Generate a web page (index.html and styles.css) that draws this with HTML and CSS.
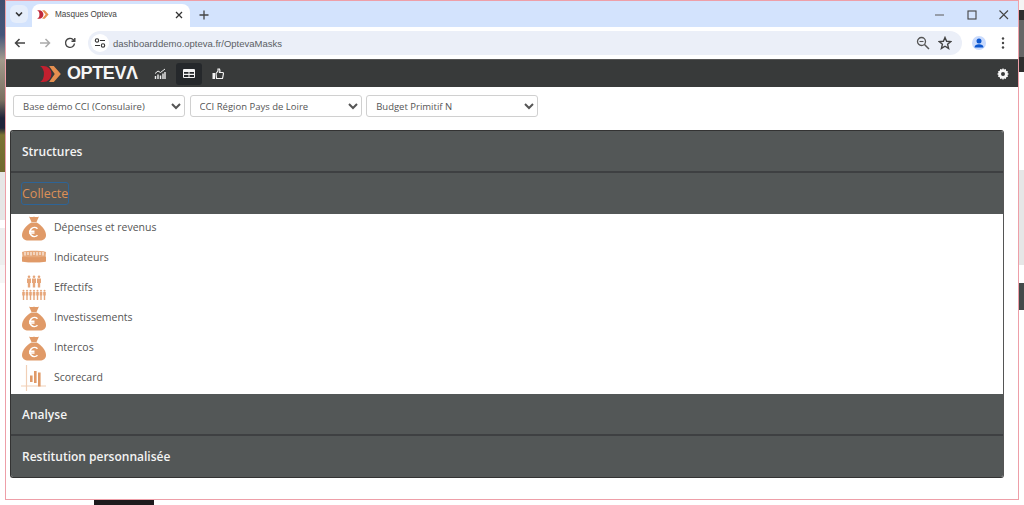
FILE: index.html
```html
<!DOCTYPE html>
<html lang="fr">
<head>
<meta charset="utf-8">
<title>Masques Opteva</title>
<link rel="stylesheet" href="styles.css">
</head>
<body>
<div class="bg-left"></div>
<div class="bg-right"></div>
<div class="bg-bottom"></div>
<div class="window">
  <div class="tabstrip">
    <span class="tabsearch"><svg width="10" height="10" viewBox="0 0 10 10"><path d="M2 3.500 5 6.500 8 3.500" fill="none" stroke="#333" stroke-width="1.600"/></svg></span>
    <div class="tab">
      <svg class="favicon" width="12" height="9" viewBox="0 0 14 10"><path d="M0 0h2.500a5 5 0 0 1 0 10H0a5 5 0 0 0 2.800-5A5 5 0 0 0 0 0z" fill="#c0283a"/><path d="M6 0h3l4.500 5L9 10H6l4-5z" fill="#e8904f"/></svg>
      <span class="tabtitle">Masques Opteva</span>
      <svg class="tabclose" width="10" height="10" viewBox="0 0 10 10"><path d="M2 2 8 8M8 2 2 8" stroke="#333" stroke-width="1.300"/></svg>
    </div>
    <svg class="newtab" width="12" height="12" viewBox="0 0 12 12"><path d="M6 1.500v9M1.500 6h9" stroke="#444" stroke-width="1.300"/></svg>
    <div class="winctl">
      <svg width="12" height="12" viewBox="0 0 12 12"><path d="M1 6h9" stroke="#666" stroke-width="1.100"/></svg>
      <svg width="12" height="12" viewBox="0 0 12 12"><rect x="2" y="2" width="8" height="8" fill="none" stroke="#444" stroke-width="1.100"/></svg>
      <svg width="12" height="12" viewBox="0 0 12 12"><path d="M1.500 1.500 10 10M10 1.500 1.500 10" stroke="#444" stroke-width="1.100"/></svg>
    </div>
  </div>
  <div class="toolbar">
    <svg class="nav" width="14" height="14" viewBox="0 0 14 14"><path d="M12 7H2.500M6.500 3 2.500 7l4 4" fill="none" stroke="#444" stroke-width="1.500"/></svg>
    <svg class="nav" width="14" height="14" viewBox="0 0 14 14"><path d="M2 7h9.500M7.500 3l4 4-4 4" fill="none" stroke="#aaa" stroke-width="1.500"/></svg>
    <svg class="nav" width="14" height="14" viewBox="0 0 14 14"><path d="M11.500 7.500A4.500 4.500 0 1 1 10 3.500L11.500 5M11.800 2v3.300H8.500" fill="none" stroke="#444" stroke-width="1.400"/></svg>
    <div class="omnibox">
      <span class="siteinfo"><svg width="12" height="10" viewBox="0 0 12 10"><circle cx="3" cy="2.500" r="1.700" fill="none" stroke="#333" stroke-width="1.100"/><path d="M6 2.500h5M1 7.500h5" stroke="#333" stroke-width="1.200"/><circle cx="9" cy="7.500" r="1.700" fill="none" stroke="#333" stroke-width="1.100"/></svg></span>
      <span class="url">dashboarddemo.opteva.fr/OptevaMasks</span>
      <svg class="omni-zoom" width="14" height="14" viewBox="0 0 14 14"><circle cx="5.500" cy="5.500" r="4" fill="none" stroke="#555" stroke-width="1.300"/><path d="M8.500 8.500 13 13" stroke="#555" stroke-width="1.500"/><path d="M3.500 5.500h4" stroke="#555" stroke-width="1.100"/></svg>
      <svg class="omni-star" width="14" height="14" viewBox="0 0 14 14"><path d="M7 1.500 8.600 5.300 12.800 5.600 9.600 8.300 10.600 12.400 7 10.200 3.400 12.400 4.400 8.300 1.200 5.600 5.400 5.300z" fill="none" stroke="#444" stroke-width="1.400"/></svg>
    </div>
    <span class="avatar"><svg width="14" height="14" viewBox="0 0 14 14"><circle cx="7" cy="5" r="2.500" fill="#0b57d0"/><path d="M2.500 11.500c0-2.500 2-3.200 4.500-3.200s4.500.7 4.500 3.200z" fill="#0b57d0"/></svg></span>
    <svg class="kebab" width="4" height="14" viewBox="0 0 4 14"><circle cx="2" cy="2.500" r="1.200" fill="#444"/><circle cx="2" cy="7" r="1.200" fill="#444"/><circle cx="2" cy="11.500" r="1.200" fill="#444"/></svg>
  </div>
  <header class="appbar">
    <svg class="logo-mark" width="21" height="16" viewBox="0 0 22 17"><path d="M0 0h3.500a8.500 8.500 0 0 1 0 17H0a10 10 0 0 0 4-8.500A10 10 0 0 0 0 0z" fill="#c3202f"/><path d="M9.500 0h5L22 8.500 14.500 17h-5l6-8.500z" fill="#e58f50"/></svg>
    <span class="logo-text">OPTEVΛ</span>
    <nav class="appnav">
      <span class="navitem"><svg width="12" height="12" viewBox="0 0 12 12"><path d="M1.500 11V8M4 11V6.500M6.500 11V7.500M9 11V5.500M11 11V4" stroke="#eee" stroke-width="1.400"/><path d="M1 5.500 4 3l2.500 1.500L11 1" fill="none" stroke="#eee" stroke-width="1"/></svg></span>
      <span class="navitem active"><svg width="12" height="11" viewBox="0 0 12 11"><path d="M1 1a1 1 0 0 0-1 1v7a1 1 0 0 0 1 1h10a1 1 0 0 0 1-1V2a1 1 0 0 0-1-1zM1 4h4.500v1.800H1zm5.500 0H11v1.800H6.500zM1 7h4.500v2H1zm5.500 0H11v2H6.500z" fill="#f4f4f4" fill-rule="evenodd"/></svg></span>
      <span class="navitem"><svg width="12" height="12" viewBox="0 0 12 12"><rect x="0.500" y="5" width="2.500" height="6" fill="#f4f4f4"/><path d="M4 5.500 6 3V1h1.500L8 3 7.500 4.500H11l.5 1-1 5H4.500z" fill="none" stroke="#f4f4f4" stroke-width="1.200"/></svg></span>
    </nav>
    <svg class="gear" width="12" height="12" viewBox="0 0 12 12"><path d="M6 0l1 1.600 1.800-.5.400 1.800 1.800.4-.5 1.800L12 6l-1.500 1 .5 1.800-1.800.4-.4 1.800-1.800-.5L6 12l-1-1.500-1.800.5-.4-1.800L1 8.800 1.500 7 0 6l1.500-1L1 3.200l1.800-.4.400-1.800 1.800.5zM6 4a2 2 0 1 0 0 4 2 2 0 0 0 0-4z" fill="#f6f6f6" fill-rule="evenodd"/></svg>
  </header>
  <div class="filters">
    <select class="pick"><option>Base démo CCI (Consulaire)</option></select>
    <select class="pick"><option>CCI Région Pays de Loire</option></select>
    <select class="pick"><option>Budget Primitif N</option></select>
  </div>
  <div class="accordion">
    <div class="head"><span>Structures</span></div>
    <div class="head open"><span class="focus">Collecte</span></div>
    <ul class="items">
      <li><svg class="ic" viewBox="0 0 26 26"><use href="#bag"/></svg><span>Dépenses et revenus</span></li>
      <li><svg class="ic" viewBox="0 0 26 26"><use href="#ruler"/></svg><span>Indicateurs</span></li>
      <li><svg class="ic" viewBox="0 0 26 26"><use href="#people"/></svg><span>Effectifs</span></li>
      <li><svg class="ic" viewBox="0 0 26 26"><use href="#bag"/></svg><span>Investissements</span></li>
      <li><svg class="ic" viewBox="0 0 26 26"><use href="#bag"/></svg><span>Intercos</span></li>
      <li><svg class="ic" viewBox="0 0 26 26"><use href="#score"/></svg><span>Scorecard</span></li>
    </ul>
    <div class="head"><span>Analyse</span></div>
    <div class="head last"><span>Restitution personnalisée</span></div>
  </div>
</div>
<svg class="defs" width="0" height="0">
  <defs>
    <g id="bag">
      <path d="M8 1.500c2 1 3 .2 5 .2s3 .8 5-.2l-2.500 5.500h-5z" fill="#e09a68"/>
      <path d="M10.300 7.500h5.400C20 10 25 15 25 20c0 4-3 5.500-6 5.500H7c-3 0-6-1.500-6-5.500 0-5 5-10 9.300-12.500z" fill="#e09a68"/>
      <path d="M16.500 13.700a4.500 4.500 0 1 0 0 6.600M8 16.200h5.500M8 17.900h5.500" fill="none" stroke="#fff" stroke-width="1.500"/>
    </g>
    <g id="ruler">
      <path d="M1 7c3-1.200 8-1.200 12-1.200s9 0 12 1.200l-.8 9.500c-3 1-7 .8-11.200.8s-8 .2-11-.8z" fill="#e6a97c"/>
      <path d="M1 11.500c3 1 21 1 24 0v5c-3 1-21 1-24 0z" fill="#e09a68"/>
      <path d="M4 7v3.500M7 7v3M10 7v3.500M13 7v3M16 7v3.500M19 7v3M22 7v3.500" stroke="#fff" stroke-width="1"/>
    </g>
    <g id="people" fill="#e6a67a">
      <g id="big"><circle cx="8" cy="1.800" r="1.300"/><path d="M6 3.500h4v4.500H9.200v4.500H6.800V8H6z"/></g>
      <use href="#big" x="5"/><use href="#big" x="10"/>
      <g id="small"><circle cx="2.500" cy="15.800" r="1"/><path d="M1.200 17h2.600v3.500h-.6v4.500H1.800v-4.500h-.6z"/></g>
      <use href="#small" x="3.500"/><use href="#small" x="7"/><use href="#small" x="10.500"/><use href="#small" x="14"/><use href="#small" x="17.500"/><use href="#small" x="21"/>
    </g>
    <g id="score">
      <path d="M5.500 0v26M0 21h25" stroke="#f1cfb6" stroke-width="1.200"/>
      <path d="M9 10.500h2.600v6.500H9zM13 6h2.600v12H13zM17 7.500h2.600v14H17z" fill="#e09a68"/>
    </g>
  </defs>
</svg>
</body>
</html>
```

FILE: styles.css
```css
* { box-sizing: border-box; }
html, body { margin: 0; height: 505px; overflow: hidden; }
body { background: #fff; font-family: "Open Sans", "Noto Sans", sans-serif; position: relative; }
.defs { position: absolute; }
.bg-left { position: absolute; left: 0; top: 0; width: 5px; height: 505px;
  background: linear-gradient(#3f4f70 0, #46557a 35px, #a39a8c 60px, #7a6f60 100px, #20243a 118px, #20243a 128px, #7b7434 135px, #6f6a30 172px, #e6e6e6 172px, #e6e6e6 220px, #fff 220px, #fff 228px, #eeeeee 228px, #eeeeee 265px, #f6f6f6 265px, #f6f6f6 283px, #fff 283px); }
.bg-right { position: absolute; left: 1019px; top: 0; width: 5px; height: 505px;
  background: linear-gradient(#f4f4f4 0, #f4f4f4 10px, #2e2e2e 10px, #2e2e2e 20px, #666 20px, #666 57px, #2e2e2e 57px, #2e2e2e 72px, #fff 72px, #fff 170px, #e6e6e6 170px, #e6e6e6 265px, #fff 265px, #fff 283px, #444a4a 283px, #444a4a 310px, #fff 310px); }
.bg-bottom { position: absolute; left: 94px; top: 500px; width: 60px; height: 5px; background: #1d1a1c; }
.window { position: absolute; left: 5px; top: 0; width: 1014px; height: 500px; background: #fff; box-shadow: inset 0 0 0 1px #ee9fa8; }
.window > * { margin-left: 1px; margin-right: 1px; }
.tabstrip { height: 26px; margin-top: 1px; background: #d3e3fd; display: flex; align-items: flex-end; position: relative; }
.tabsearch { width: 18px; height: 18px; border-radius: 6px; background: #e6eefb; margin: 0 0 4px 4px; display: flex; align-items: center; justify-content: center; }
.tab { width: 158px; height: 23px; margin-left: 4px; background: #fff; border-radius: 8px 8px 0 0; display: flex; align-items: center; padding: 0 6px 2px 5px; }
.tabtitle { font-family: "Liberation Sans", sans-serif; font-size: 8.200px; color: #444; margin-left: 6px; flex: 1; }
.newtab { margin: 0 0 6px 8px; }
.winctl { margin-left: auto; display: flex; gap: 20px; padding: 0 8px 6px 0; }
.toolbar { height: 32px; background: #fff; display: flex; align-items: center; padding-left: 7px; }
.nav { margin-right: 11px; }
.omnibox { width: 874px; height: 24px; border-radius: 12px; background: #ebeff8; display: flex; align-items: center; padding: 0 10px 0 3px; }
.siteinfo { width: 18px; height: 18px; background: #fff; border-radius: 9px; display: flex; align-items: center; justify-content: center; }
.url { font-family: "Liberation Sans", sans-serif; font-size: 9.500px; color: #5a5e64; margin-left: 4px; flex: 1; }
.omni-zoom { margin-right: 8px; }
.avatar { width: 14px; height: 14px; margin-left: 10px; border-radius: 7px; background: #c9dafc; display: flex; }
.kebab { margin-left: 15px; }
.appbar { height: 28px; background: #383a3a; display: flex; align-items: center; padding-left: 34px; padding-right: 9px; border-top: 1px solid #555; }
.logo-text { font-family: "Liberation Sans", sans-serif; font-weight: 700; font-size: 18px; letter-spacing: -.4px; color: #f6f6f6; margin-left: 6px; }
.appnav { display: flex; margin-left: 9px; gap: 3px; }
.navitem { width: 26px; height: 22px; border-radius: 3px; display: flex; align-items: center; justify-content: center; }
.navitem.active { background: #25282b; }
.gear { margin-left: auto; }
.filters { display: flex; gap: 4.600px; padding: 8px 0 0 7px; height: 43px; }
.pick { width: 172px; height: 22px; font-family: "Open Sans", sans-serif; font-size: 9.500px; color: #555; background: #fff; border: 1px solid #d0d0d0; border-radius: 3px; padding: 0 5px; }
.window > .accordion { margin-left: 5px; }
.accordion { width: 994px; border: 1px solid #333; border-right-color: #555; border-radius: 3px; overflow: hidden; }
.head { height: 42px; background: #535757; color: #f4f4f4; font-size: 12px; font-weight: 600; display: flex; align-items: center; padding-left: 11px; border-bottom: 2px solid #3e4042; }
.head.last { height: 41px; border-bottom: 0; }
.head.open { height: 41px; border-bottom: 0; color: #dd9058; font-size: 12.500px; font-weight: 500; }
.focus { padding: 2px 0; margin-left: -1px; border: 1px solid #2e6496; border-radius: 3px; }
.items { list-style: none; margin: 0; padding: 0; background: #fff; }
.items li { height: 30px; display: flex; align-items: center; font-size: 10.500px; color: #555; padding: 0 0 2px 10px; }
.items li span { padding-bottom: 2px; }
.ic { width: 26px; height: 26px; margin-right: 7px; }
```
